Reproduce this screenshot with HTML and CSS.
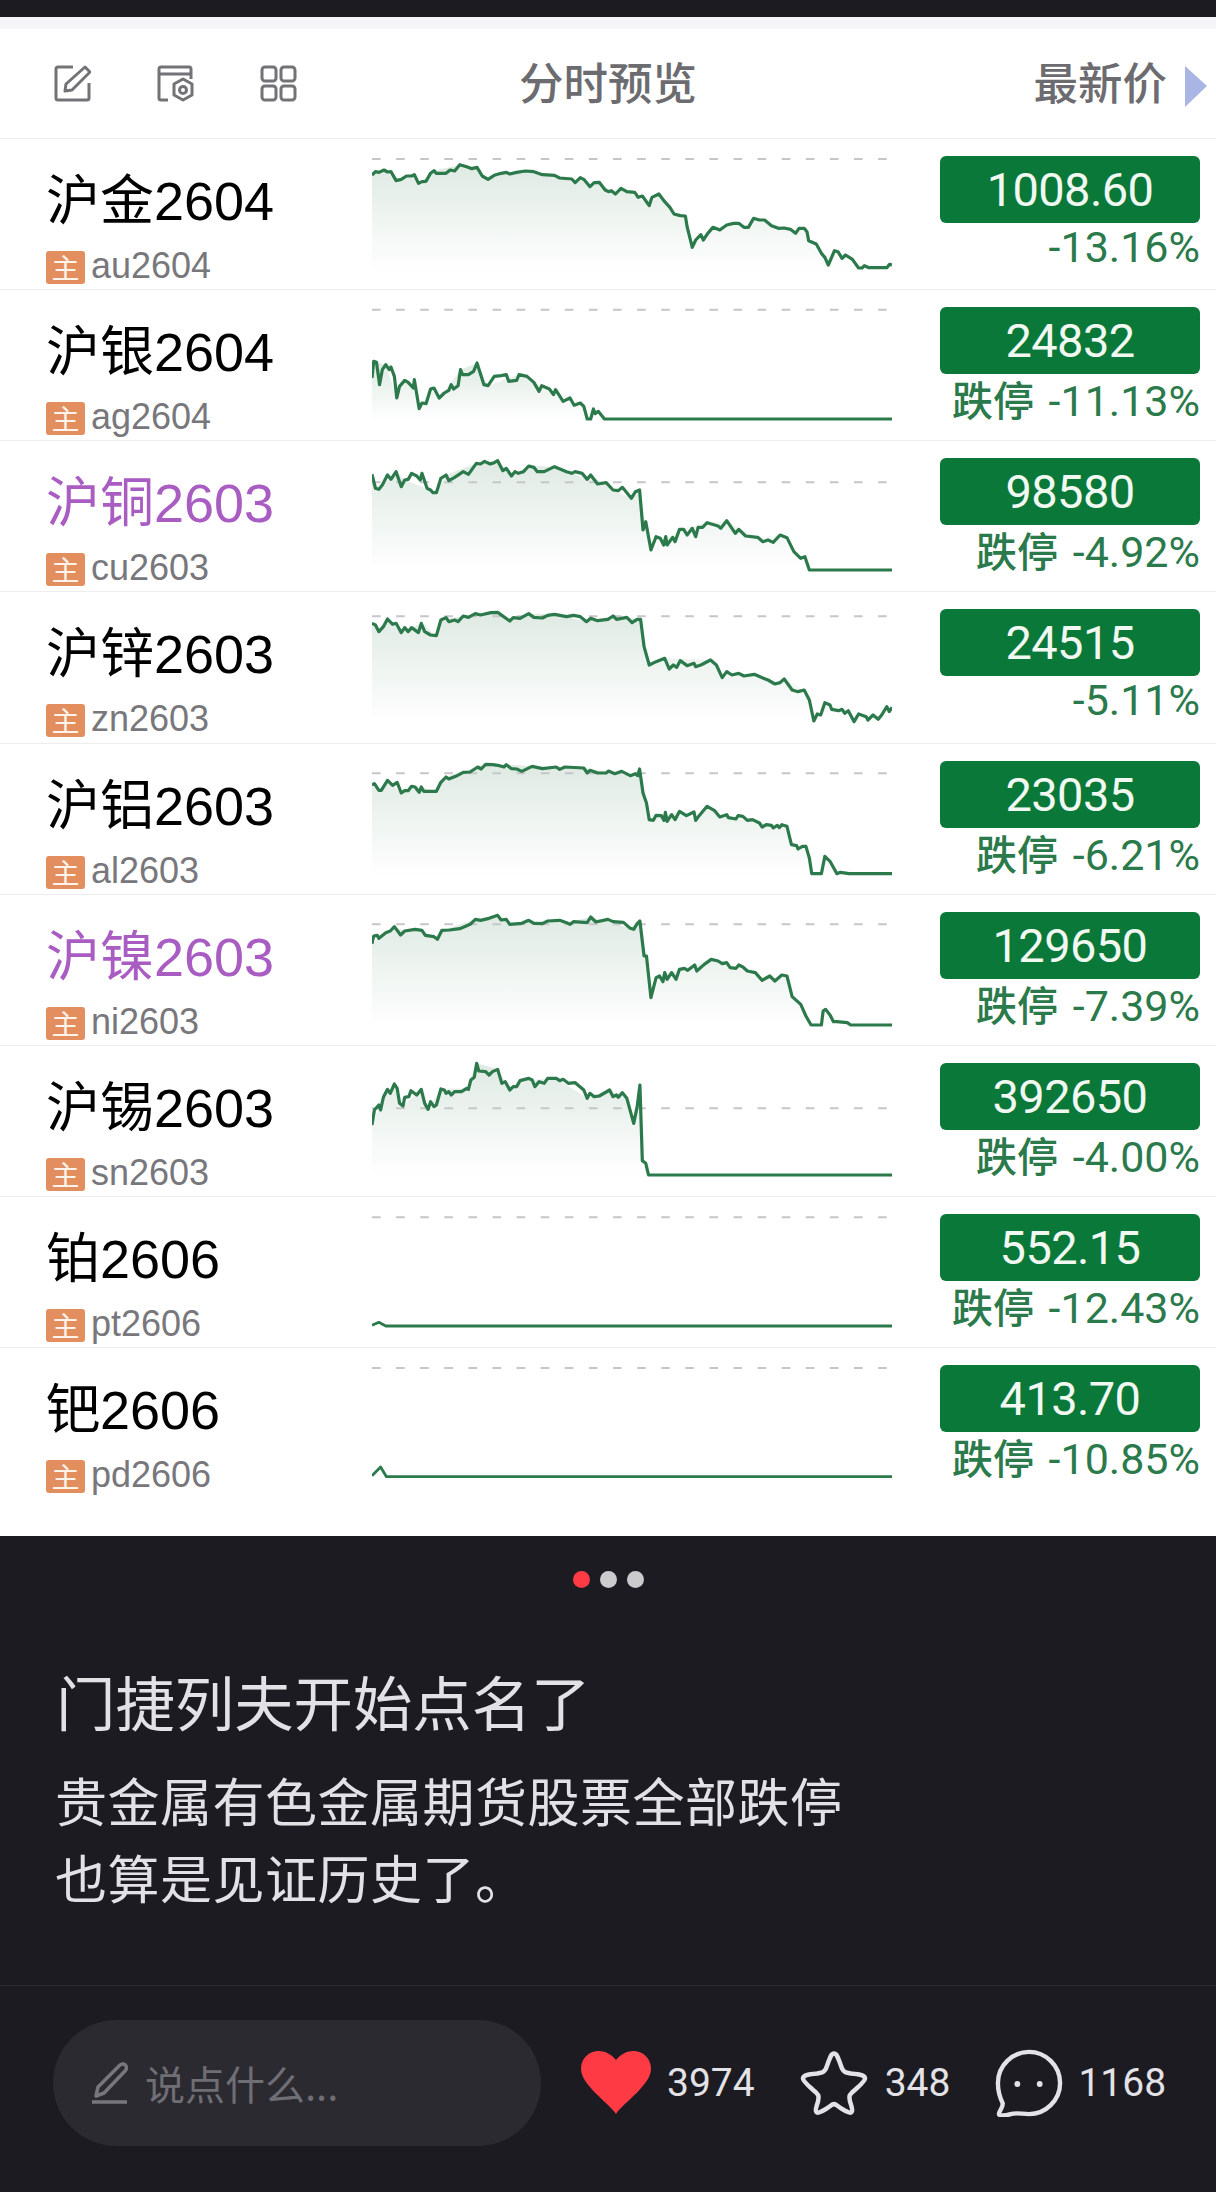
FILE: index.html
```html
<!DOCTYPE html>
<html lang="zh-CN">
<head>
<meta charset="utf-8">
<title>门捷列夫开始点名了</title>
<link rel="stylesheet" href="styles.css">
</head>
<body>
<div class="topbar"></div>
<div class="strip"></div>

<header class="head">
  <div class="tools">
    <svg class="tool" viewBox="0 0 37 37"><path d="M19 2H4a2 2 0 0 0-2 2v29a2 2 0 0 0 2 2h29a2 2 0 0 0 2-2V18"/><path d="M31 2l5 5-18 18-7 1 1-7z"/></svg>
    <svg class="tool" viewBox="0 0 37 37"><path d="M11 35H4a2 2 0 0 1-2-2V4a2 2 0 0 1 2-2h28a2 2 0 0 1 2 2v10M2 9h32"/><path d="M26 14l9 5v11l-9 5-9-5V19z"/><circle cx="26" cy="25" r="3.5"/></svg>
    <svg class="tool" viewBox="0 0 37 37"><rect x="2" y="2" width="14" height="14" rx="3"/><rect x="21" y="2" width="14" height="14" rx="3"/><rect x="2" y="21" width="14" height="14" rx="3"/><rect x="21" y="21" width="14" height="14" rx="3"/></svg>
  </div>
  <div class="head-title">分时预览</div>
  <div class="head-sort"><span class="sort-text">最新价</span><svg class="sort-arrow" viewBox="0 0 22 41"><path d="M0 0l22 20L0 41z"/></svg></div>
</header>

<svg class="defs" width="0" height="0" aria-hidden="true">
  <defs>
    <linearGradient id="area" x1="0" y1="0" x2="0" y2="1">
      <stop offset="0" stop-color="#dfeae3"/>
      <stop offset="1" stop-color="#ffffff"/>
    </linearGradient>
  </defs>
</svg>

<main class="list">
  <div class="row">
    <div class="name"><div class="title">沪金2604</div><div class="code"><span class="tag">主</span>au2604</div></div>
    <svg class="chart" viewBox="35 -6 1510 453" preserveAspectRatio="none">
      <polygon class="area" points="35,396 35,105 70,90 105,122 158,104 170,130 215,92 290,74 340,82 372,118 425,97 480,93 580,114 625,128 640,113 668,140 695,127 742,162 758,145 808,172 840,197 868,162 912,222 945,228 965,322 1025,262 1100,250 1128,262 1143,235 1175,240 1265,280 1290,265 1303,302 1360,375 1378,332 1448,384 1545,375 1545,396"/>
      <line class="dash" x1="35" y1="57" x2="1545" y2="57"/>
      <polyline class="line" points="35,105 45,95 55,97 70,90 80,96 90,95 105,122 120,118 135,108 150,108 158,104 170,130 180,125 192,124 205,100 215,92 222,100 235,100 250,100 262,90 275,93 290,74 310,80 325,86 340,82 355,108 372,118 390,106 410,100 425,97 435,102 455,97 480,93 505,95 530,104 565,106 580,114 615,117 625,128 640,113 650,118 668,140 680,128 695,127 712,150 722,155 730,152 742,162 758,145 775,155 798,157 808,172 820,168 840,197 848,172 868,162 885,185 900,202 912,222 930,227 945,228 950,260 965,322 975,300 990,284 997,300 1010,280 1025,262 1045,270 1065,255 1085,250 1100,250 1115,262 1128,262 1143,235 1160,240 1175,240 1195,257 1215,265 1232,264 1250,268 1265,280 1275,265 1290,265 1298,275 1303,302 1325,312 1340,340 1350,352 1360,375 1378,332 1388,335 1400,355 1410,345 1430,358 1448,384 1458,384 1465,377 1478,383 1530,383 1538,373 1545,375"/>
    </svg>
    <div class="quote"><div class="price">1008.60</div><div class="chg">-13.16%</div></div>
  </div>

  <div class="row">
    <div class="name"><div class="title">沪银2604</div><div class="code"><span class="tag">主</span>ag2604</div></div>
    <svg class="chart" viewBox="35 448 1510 453" preserveAspectRatio="none">
      <polygon class="area" points="35,844 35,715 40,665 75,675 107,775 130,722 155,745 172,807 205,748 230,775 292,690 340,670 372,738 460,705 505,728 590,785 650,800 660,838 1545,838 1545,844"/>
      <line class="dash" x1="35" y1="510" x2="1545" y2="510"/>
      <polyline class="line" points="35,715 40,665 48,668 57,735 65,690 75,675 85,690 90,682 100,710 107,775 115,740 130,722 140,728 155,745 158,720 172,807 180,790 192,792 205,748 215,745 230,775 245,760 258,752 265,735 272,748 285,738 292,690 298,705 315,705 330,695 340,670 360,735 372,738 390,710 410,708 425,705 432,725 455,722 462,705 485,710 505,728 520,755 528,738 550,748 562,765 568,750 590,785 610,775 622,797 640,790 650,800 660,838 670,838 678,808 683,822 692,815 710,838 1545,838"/>
    </svg>
    <div class="quote"><div class="price">24832</div><div class="chg"><span class="lim">跌停</span> -11.13%</div></div>
  </div>

  <div class="row">
    <div class="name"><div class="title title-seen">沪铜2603</div><div class="code"><span class="tag">主</span>cu2603</div></div>
    <svg class="chart" viewBox="35 0 1510 453" preserveAspectRatio="none">
      <polygon class="area" points="35,396 35,103 55,148 105,95 130,120 222,158 250,105 338,70 400,62 440,108 490,78 565,80 660,118 670,105 735,150 788,175 812,150 830,245 845,330 928,268 1008,248 1065,242 1155,292 1220,285 1305,390 1545,390 1545,396"/>
      <line class="dash" x1="35" y1="127" x2="1545" y2="127"/>
      <polyline class="line" points="35,103 45,145 55,148 65,135 80,105 90,118 105,95 120,140 130,120 140,118 150,100 165,108 175,120 180,100 195,145 205,150 212,158 222,158 235,115 250,105 258,122 275,112 300,95 315,103 338,70 350,72 362,64 378,72 390,68 400,62 415,92 425,85 440,108 450,95 460,100 475,95 490,78 505,82 515,95 535,95 565,80 600,95 615,100 625,95 645,100 660,118 670,105 690,132 715,128 735,150 750,152 762,142 788,175 800,155 812,150 822,270 830,245 845,330 860,290 872,295 882,315 888,290 892,315 908,292 915,305 928,268 940,268 950,285 965,265 975,290 982,262 995,262 1008,248 1040,258 1048,265 1065,242 1090,280 1100,268 1120,288 1155,292 1170,305 1185,300 1200,307 1220,285 1240,293 1260,335 1280,355 1292,350 1305,390 1545,390"/>
    </svg>
    <div class="quote"><div class="price">98580</div><div class="chg"><span class="lim">跌停</span> -4.92%</div></div>
  </div>

  <div class="row">
    <div class="name"><div class="title">沪锌2603</div><div class="code"><span class="tag">主</span>zn2603</div></div>
    <svg class="chart" viewBox="35 453 1510 453" preserveAspectRatio="none">
      <polygon class="area" points="35,852 35,550 55,575 80,537 120,578 178,550 222,587 235,540 335,521 400,517 435,543 490,521 565,523 658,545 735,528 815,538 840,675 885,655 1018,660 1052,713 1145,703 1205,732 1232,717 1290,750 1318,843 1350,788 1435,845 1530,800 1545,802 1545,852"/>
      <line class="dash" x1="35" y1="529" x2="1545" y2="529"/>
      <polyline class="line" points="35,550 45,555 55,575 68,560 80,537 95,553 105,550 120,578 130,563 140,575 150,563 170,578 178,550 188,575 205,585 222,587 235,540 250,533 258,545 275,540 285,545 300,528 315,532 335,521 350,525 380,518 400,517 435,543 445,533 465,535 490,521 505,532 530,534 545,526 565,523 600,530 620,526 640,530 658,545 670,535 690,542 720,538 735,528 745,538 775,532 790,548 805,538 815,538 825,620 840,675 860,665 885,655 898,687 910,675 920,682 930,662 950,677 970,670 975,680 990,675 1018,660 1035,675 1052,713 1065,695 1080,705 1100,700 1115,708 1145,703 1165,712 1185,720 1205,732 1220,728 1232,717 1255,750 1272,755 1290,750 1305,780 1318,843 1328,822 1338,825 1350,788 1365,795 1370,808 1390,812 1400,808 1408,820 1418,812 1435,845 1448,822 1470,830 1475,840 1490,825 1505,838 1515,825 1530,800 1537,815 1545,802"/>
    </svg>
    <div class="quote"><div class="price">24515</div><div class="chg">-5.11%</div></div>
  </div>

  <div class="row">
    <div class="name"><div class="title">沪铝2603</div><div class="code"><span class="tag">主</span>al2603</div></div>
    <svg class="chart" viewBox="35 0 1510 453" preserveAspectRatio="none">
      <polygon class="area" points="35,402 35,125 55,142 80,112 120,150 178,132 222,145 250,102 365,64 425,65 500,70 650,75 785,98 812,78 832,180 840,230 928,205 975,232 1008,190 1045,222 1125,232 1240,250 1253,305 1295,310 1312,392 1340,392 1350,340 1385,392 1545,392 1545,402"/>
      <line class="dash" x1="35" y1="91" x2="1545" y2="91"/>
      <polyline class="line" points="35,125 42,122 55,142 62,142 80,112 95,127 108,118 120,150 130,143 140,143 150,130 160,132 172,148 178,132 185,145 222,145 235,118 250,102 258,108 278,100 300,88 320,87 342,72 352,78 365,64 385,65 405,68 418,72 425,65 440,77 455,78 470,85 500,70 530,77 570,72 580,79 595,72 650,75 660,90 668,82 690,90 715,90 722,84 740,92 760,85 785,98 800,92 807,98 812,78 822,150 832,180 840,230 852,232 860,217 875,218 883,232 887,208 892,235 905,215 915,230 928,205 948,218 970,207 975,232 985,218 1008,190 1030,203 1045,222 1065,215 1070,224 1092,228 1098,218 1112,220 1125,232 1140,230 1160,240 1168,252 1180,245 1195,247 1200,255 1212,247 1218,254 1225,245 1240,250 1253,305 1268,308 1272,318 1285,310 1295,310 1305,345 1312,392 1340,392 1350,340 1365,355 1385,392 1395,388 1420,392 1545,392"/>
    </svg>
    <div class="quote"><div class="price">23035</div><div class="chg"><span class="lim">跌停</span> -6.21%</div></div>
  </div>

  <div class="row">
    <div class="name"><div class="title title-seen">沪镍2603</div><div class="code"><span class="tag">主</span>ni2603</div></div>
    <svg class="chart" viewBox="35 9 1510 453" preserveAspectRatio="none">
      <polygon class="area" points="35,408 35,158 100,107 130,120 180,118 225,145 238,118 335,85 400,73 435,100 490,88 600,95 670,78 785,112 813,90 832,195 845,320 870,255 928,235 1020,205 1125,240 1168,268 1240,255 1255,317 1310,402 1340,402 1352,355 1425,402 1545,402 1545,408"/>
      <line class="dash" x1="35" y1="100" x2="1545" y2="100"/>
      <polyline class="line" points="35,158 40,135 50,133 55,142 75,125 88,120 100,107 118,132 130,120 160,115 180,118 190,133 215,137 225,145 238,118 260,117 290,113 320,100 335,85 350,88 375,82 400,73 410,87 425,85 435,100 470,97 490,88 505,97 530,98 545,90 580,88 600,95 610,100 620,92 660,95 670,78 685,93 720,85 735,92 765,94 785,112 795,115 805,98 813,90 825,195 832,195 845,320 860,260 870,255 880,272 885,245 892,265 905,245 918,265 928,235 942,232 952,238 972,222 978,240 1000,220 1020,205 1040,210 1052,218 1065,215 1075,230 1092,232 1100,222 1112,228 1125,240 1148,245 1168,268 1190,255 1205,270 1225,252 1240,255 1255,317 1280,340 1295,375 1310,402 1340,402 1345,360 1352,355 1365,372 1375,392 1385,392 1415,395 1425,402 1545,402"/>
    </svg>
    <div class="quote"><div class="price">129650</div><div class="chg"><span class="lim">跌停</span> -7.39%</div></div>
  </div>

  <div class="row">
    <div class="name"><div class="title">沪锡2603</div><div class="code"><span class="tag">主</span>sn2603</div></div>
    <svg class="chart" viewBox="35 465 1510 453" preserveAspectRatio="none">
      <polygon class="area" points="35,861 35,705 68,622 100,582 125,648 178,598 198,658 235,597 310,595 339,520 400,538 435,600 465,572 570,565 660,625 725,600 775,625 795,700 813,585 820,812 838,855 1545,855 1545,861"/>
      <line class="dash" x1="35" y1="655" x2="1545" y2="655"/>
      <polyline class="line" points="35,705 42,660 55,645 60,660 68,622 80,598 88,610 100,582 108,595 115,640 125,648 130,622 142,620 148,602 165,615 178,598 188,640 198,658 205,635 215,650 222,645 235,597 245,600 250,610 258,605 265,615 275,605 295,605 310,595 315,598 322,570 332,562 339,520 345,543 365,545 375,555 385,545 400,538 412,580 422,575 435,600 445,590 455,590 465,572 490,565 500,570 508,590 520,575 535,580 545,565 570,565 580,572 590,568 605,580 625,578 650,600 660,625 668,610 680,620 695,618 725,600 735,620 745,615 750,622 762,608 775,625 795,700 805,650 813,585 820,812 830,820 838,855 1545,855"/>
    </svg>
    <div class="quote"><div class="price">392650</div><div class="chg"><span class="lim">跌停</span> -4.00%</div></div>
  </div>

  <div class="row">
    <div class="name"><div class="title">铂2606</div><div class="code"><span class="tag">主</span>pt2606</div></div>
    <svg class="chart" viewBox="35 0 1510 453" preserveAspectRatio="none">
      <line class="dash" x1="35" y1="64" x2="1545" y2="64"/>
      <polyline class="line line-thin" points="35,388 55,379 75,390 1545,390"/>
    </svg>
    <div class="quote"><div class="price">552.15</div><div class="chg"><span class="lim">跌停</span> -12.43%</div></div>
  </div>

  <div class="row row-last">
    <div class="name"><div class="title">钯2606</div><div class="code"><span class="tag">主</span>pd2606</div></div>
    <svg class="chart" viewBox="35 0 1510 453" preserveAspectRatio="none">
      <line class="dash" x1="35" y1="63" x2="1545" y2="63"/>
      <polyline class="line line-thin" points="35,386 60,360 77,389 1545,389"/>
    </svg>
    <div class="quote"><div class="price">413.70</div><div class="chg"><span class="lim">跌停</span> -10.85%</div></div>
  </div>
</main>

<section class="post">
  <div class="dots"><span class="dot dot-on"></span><span class="dot"></span><span class="dot"></span></div>
  <h1 class="post-title">门捷列夫开始点名了</h1>
  <p class="post-text">贵金属有色金属期货股票全部跌停<br>也算是见证历史了。</p>
</section>

<footer class="bar">
  <div class="input">
    <svg class="input-pen" viewBox="0 0 37 42"><path d="M29 3c2-2 5-1 6 1s0 4-1 5L13 31l-8 3 2-9z"/><path d="M1 40h35"/></svg>
    <span class="input-text">说点什么...</span>
  </div>
  <div class="actions">
    <div class="action">
      <svg class="ic-heart" viewBox="0 0 70 63"><path d="M35 63C28 52 0 34 0 18 0 7 8 0 18 0c7 0 13 4 17 9 4-5 10-9 17-9 10 0 18 7 18 18 0 16-28 34-35 45z"/></svg>
      <span class="count">3974</span>
    </div>
    <div class="action">
      <svg class="ic-line" viewBox="0 0 70 67"><path d="M35 4c3 0 4 4 8 15 2 4 4 4 9 5 10 1 14 2 14 5 0 2-6 8-13 14-3 3-3 4-2 9 2 6 3 10 1 11s-10-4-14-7c-2-2-4-2-6 0-4 3-12 8-14 7s-1-5 1-11c1-5 1-6-2-9C10 37 4 31 4 29c0-3 4-4 14-5 5-1 7-1 9-5 4-11 5-15 8-15z"/></svg>
      <span class="count">348</span>
    </div>
    <div class="action action-tight">
      <svg class="ic-line" viewBox="0 0 70 70"><path d="M35 3c17 0 32 14 32 32S52 67 35 67c-7 0-13-2-19 0-6 2-12 2-12 0 0-3 4-6 4-11C5 50 3 43 3 35 3 17 18 3 35 3z"/><circle class="ic-dot" cx="23" cy="36" r="3"/><circle class="ic-dot" cx="46" cy="36" r="3"/></svg>
      <span class="count">1168</span>
    </div>
  </div>
</footer>
</body>
</html>
```

FILE: styles.css
```css
* { box-sizing: border-box; }

html, body {
  margin: 0;
  padding: 0;
  background: #1c1b21;
}

body {
  width: 1216px;
  height: 2192px;
  overflow: hidden;
  font-family: "Liberation Sans", "Noto Sans CJK SC", sans-serif;
}

.topbar { height: 17px; background: #1c1b21; }
.strip { height: 12px; background: #f5f5f7; }
.defs { position: absolute; }

/* table header */
.head {
  display: grid;
  grid-template-columns: 1fr auto 1fr;
  align-items: center;
  height: 109px;
  background: #fff;
  color: #6c6c70;
  font-family: "Noto Sans CJK SC", sans-serif;
  font-size: 44.5px;
  font-weight: 500;
  line-height: 60px;
}

.tools { display: flex; gap: 66px; padding-left: 54px; }
.tool { width: 37px; height: 37px; fill: none; stroke: #737377; stroke-width: 3; stroke-linejoin: round; }
.head-title { padding-bottom: 5px; text-align: center; }
.head-sort { display: flex; align-items: center; justify-content: flex-end; gap: 18px; padding-right: 9px; }
.sort-text { padding-bottom: 5px; }
.sort-arrow { width: 22px; height: 41px; margin-top: 6px; fill: #a9b6e4; }

/* rows */
.list { background: #fff; }

.row {
  display: flex;
  height: 151.125px;
  border-top: 1px solid #ededf0;
}

.row-last { height: 189px; }

.name {
  width: 372px;
  padding: 32px 0 0 46px;
}

.title {
  color: #000;
  font-size: 54px;
  line-height: 60px;
  white-space: nowrap;
}

.title-seen { color: #a95cc2; }

.code {
  display: flex;
  align-items: flex-start;
  gap: 6px;
  margin-top: 20px;
  color: #77777c;
  font-size: 36px;
  line-height: 29px;
}

.tag {
  display: block;
  width: 39px;
  height: 33px;
  border-radius: 3px;
  background: #e28e5e;
  color: #fff3ea;
  font-family: "Noto Sans CJK SC", sans-serif;
  font-size: 28px;
  line-height: 33px;
  text-align: center;
}

.chart {
  flex: none;
  width: 520px;
  height: 151px;
  margin-top: -1px;
}

.area { fill: url(#area); stroke: none; }
.dash { stroke: #c6c6ca; stroke-width: 2; stroke-dasharray: 8.6 15.5; vector-effect: non-scaling-stroke; }

.line {
  fill: none;
  stroke: #2c7a4c;
  stroke-width: 3.2;
  stroke-linejoin: round;
  vector-effect: non-scaling-stroke;
}

.line-thin { stroke-width: 2.8; }

.quote {
  flex: none;
  width: 260px;
  margin: 17px 0 0 48px;
  font-family: Roboto, "Noto Sans CJK SC", sans-serif;
}

.price {
  height: 67px;
  border-radius: 6px;
  background: #0a7838;
  color: #f1f8f2;
  font-size: 47px;
  line-height: 67px;
  letter-spacing: -0.6px;
  text-align: center;
}

.chg {
  color: #2b7a4b;
  font-size: 43px;
  line-height: 48px;
  text-align: right;
  white-space: nowrap;
}

.lim {
  margin-right: 4px;
  font-family: "Noto Sans CJK SC", sans-serif;
  font-size: 41px;
  font-weight: 500;
}

/* post text */
.post {
  height: 449px;
  padding: 35px 0 0;
  background: #1c1b21;
  color: #e2e1e5;
  font-family: "Noto Sans CJK SC", sans-serif;
}

.dots { display: flex; justify-content: center; gap: 10px; }
.dot { width: 17px; height: 17px; border-radius: 50%; background: #cbcacd; }
.dot-on { background: #fe3b45; }

.post-title {
  margin: 72px 0 0 56px;
  font-size: 59.4px;
  font-weight: 400;
  line-height: 80px;
}

.post-text {
  margin: 21px 0 0 55px;
  font-size: 52px;
  line-height: 77px;
  letter-spacing: 0.5px;
}

/* bottom bar */
.bar {
  display: flex;
  align-items: center;
  height: 207px;
  padding: 0 0 13px 53px;
  border-top: 1px solid #2e2d33;
  background: #1c1b21;
}

.input {
  display: flex;
  align-items: center;
  gap: 17px;
  width: 488px;
  height: 126px;
  padding-left: 38px;
  border-radius: 63px;
  background: #2b2a30;
}

.input-pen { width: 37px; height: 42px; fill: none; stroke: #77767c; stroke-width: 3.5; stroke-linejoin: round; }
.input-text { color: #6f6e75; font-family: "Noto Sans CJK SC", sans-serif; font-size: 40px; line-height: 50px; }

.actions { display: flex; align-items: center; gap: 44px; margin-left: 40px; }
.action { display: flex; align-items: center; gap: 16px; }
.action-tight { gap: 14px; }
.ic-heart { width: 70px; height: 63px; fill: #fe3b45; }
.ic-line { width: 70px; height: 68px; fill: none; stroke: #e3e2e6; stroke-width: 4.5; stroke-linejoin: round; }
.ic-dot { fill: #e3e2e6; stroke: none; }
.count { color: #e3e2e6; font-family: Roboto, sans-serif; font-size: 39px; line-height: 50px; }
```
